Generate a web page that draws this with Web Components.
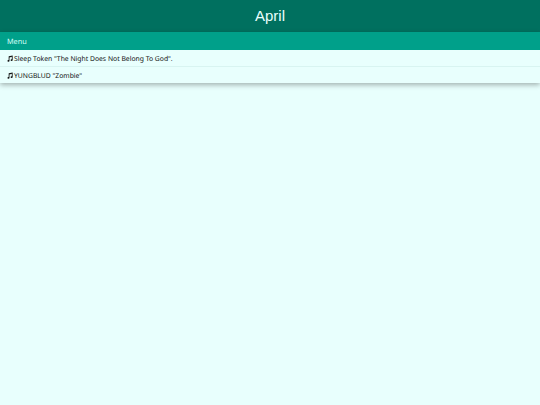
<!DOCTYPE html>
<html>
<head>
<meta charset="utf-8">
<title>April</title>
<style>
  html, body { margin: 0; height: 100%; background: #e8fffd; overflow: hidden; }
</style>
</head>
<body>
<page-header>April</page-header>
<nav-menu>
  <span slot="label">Menu</span>
  <track-item>Sleep Token "The Night Does Not Belong To God".</track-item>
  <track-item>YUNGBLUD "Zombie"</track-item>
</nav-menu>
<script>
class PageHeader extends HTMLElement {
  constructor() {
    super();
    const shadow = this.attachShadow({ mode: "open" });
    shadow.innerHTML = `
      <style>
        :host {
          display: flex;
          align-items: center;
          justify-content: center;
          height: 32px;
          background: #00705f;
          color: #e8fffd;
          font: 15px/32px "Liberation Sans", Arial, sans-serif;
        }
      </style>
      <slot></slot>
    `;
  }
}
customElements.define("page-header", PageHeader);

class NavMenu extends HTMLElement {
  constructor() {
    super();
    const shadow = this.attachShadow({ mode: "open" });
    shadow.innerHTML = `
      <style>
        :host {
          display: block;
          font: 6.8px "Noto Sans", Verdana, sans-serif;
          text-rendering: geometricPrecision;
          box-shadow: 0 2px 5px rgba(0,0,0,.3);
        }
        .label {
          display: flex;
          align-items: center;
          box-sizing: border-box;
          height: 18px;
          padding: 1px 7px 0;
          background: #00a08a;
          color: #d5fff8;
          font-size: 7.3px;
        }
      </style>
      <div class="label"><slot name="label"></slot></div>
      <slot></slot>
    `;
  }
}
customElements.define("nav-menu", NavMenu);

class TrackItem extends HTMLElement {
  constructor() {
    super();
    const shadow = this.attachShadow({ mode: "open" });
    shadow.innerHTML = `
      <style>
        :host {
          display: flex;
          align-items: center;
          gap: 1px;
          box-sizing: content-box;
          height: 15px;
          padding: 1px 7px 0;
          background: #e8fffd;
          border-bottom: 1px solid #d8f4f1;
          color: #111;
        }
        :host(:last-child) { border-bottom: 0; }
        svg { width: 6px; height: 7px; flex: none; }
      </style>
      <svg viewBox="0 0 7 8"><path fill="#111" d="M2 1.5 6.6.4v5.4a1.2 1 0 1 1-1-1V2L2.9 2.7v4a1.2 1 0 1 1-1-1z"/></svg>
      <slot></slot>
    `;
  }
}
customElements.define("track-item", TrackItem);
</script>
</body>
</html>
